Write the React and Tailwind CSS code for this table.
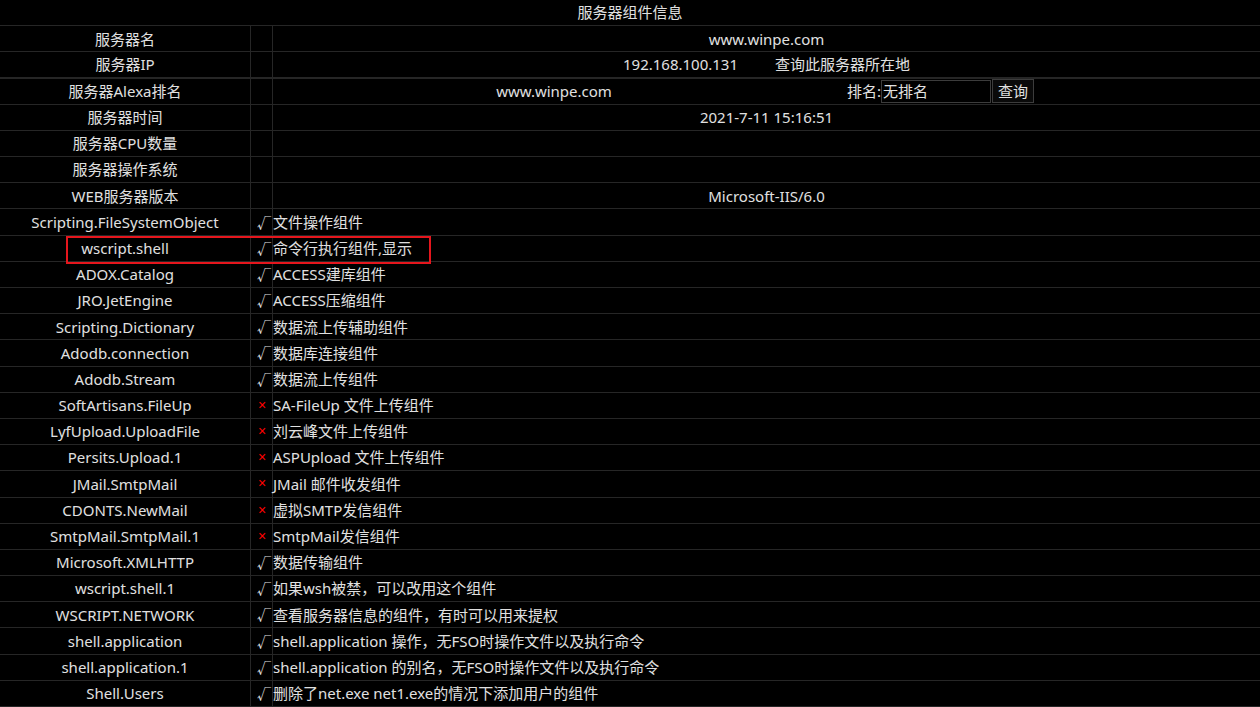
import React from "react";

const font = { fontFamily: '"Segoe UI", "Noto Sans", "Noto Sans CJK SC", sans-serif' };

const info = [
  ["服务器名", "www.winpe.com"],
  ["服务器IP", "ip"],
  ["服务器Alexa排名", "alexa"],
  ["服务器时间", "2021-7-11 15:16:51"],
  ["服务器CPU数量", ""],
  ["服务器操作系统", ""],
  ["WEB服务器版本", "Microsoft-IIS/6.0"],
];

const comps = [
  ["Scripting.FileSystemObject", true, "文件操作组件"],
  ["wscript.shell", true, "命令行执行组件,显示"],
  ["ADOX.Catalog", true, "ACCESS建库组件"],
  ["JRO.JetEngine", true, "ACCESS压缩组件"],
  ["Scripting.Dictionary", true, "数据流上传辅助组件"],
  ["Adodb.connection", true, "数据库连接组件"],
  ["Adodb.Stream", true, "数据流上传组件"],
  ["SoftArtisans.FileUp", false, "SA-FileUp 文件上传组件"],
  ["LyfUpload.UploadFile", false, "刘云峰文件上传组件"],
  ["Persits.Upload.1", false, "ASPUpload 文件上传组件"],
  ["JMail.SmtpMail", false, "JMail 邮件收发组件"],
  ["CDONTS.NewMail", false, "虚拟SMTP发信组件"],
  ["SmtpMail.SmtpMail.1", false, "SmtpMail发信组件"],
  ["Microsoft.XMLHTTP", true, "数据传输组件"],
  ["wscript.shell.1", true, "如果wsh被禁，可以改用这个组件"],
  ["WSCRIPT.NETWORK", true, "查看服务器信息的组件，有时可以用来提权"],
  ["shell.application", true, "shell.application 操作，无FSO时操作文件以及执行命令"],
  ["shell.application.1", true, "shell.application 的别名，无FSO时操作文件以及执行命令"],
  ["Shell.Users", true, "删除了net.exe net1.exe的情况下添加用户的组件"],
];

function Value({ v }) {
  if (v === "ip") {
    return (
      <div className="flex items-center justify-center gap-[37px]">
        <span>192.168.100.131</span>
        <span>查询此服务器所在地</span>
      </div>
    );
  }
  if (v === "alexa") {
    return (
      <div className="flex items-center h-full">
        <div className="w-[562px] text-center">www.winpe.com</div>
        <div className="flex items-center pl-[12px]">
          <span>排名:</span>
          <div className="w-[110px] h-[23px] border border-[#3c3c3c] bg-black px-[1px] flex items-center leading-none">无排名</div>
          <div className="ml-px w-[42px] h-[24px] border border-[#3c3c3c] bg-[#0a0a0a] flex items-center justify-center leading-none">查询</div>
        </div>
      </div>
    );
  }
  return <div className="text-center">{v}</div>;
}

export default function App() {
  return (
    <div className="relative w-[1260px] h-[707px] bg-black text-[#e0e0e0] text-[15px] overflow-hidden" style={font}>
      <div className="grid grid-cols-[251px_22px_1fr] grid-rows-[repeat(27,1fr)] h-[707px]">
        <div className="col-span-3 flex items-center justify-center border-b border-[#262626]">服务器组件信息</div>
        {info.map(([k, v], i) => (
          <React.Fragment key={k}>
            <div className={`flex items-center justify-center border-r border-[#262626] ${i === 1 ? "border-b-2" : "border-b"} border-b-[#262626]`}>{k}</div>
            <div className={`border-r border-[#262626] ${i === 1 ? "border-b-2" : "border-b"} border-b-[#262626]`}></div>
            <div className={`flex items-center justify-center ${i === 1 ? "border-b-2" : "border-b"} border-[#262626]`}>
              <div className="w-full"><Value v={v} /></div>
            </div>
          </React.Fragment>
        ))}
        {comps.map(([k, ok, d]) => (
          <React.Fragment key={k}>
            <div className="flex items-center justify-center border-r border-b border-[#262626]">{k}</div>
            <div className="flex items-center pl-[6px] border-r border-b border-[#262626]">
              {ok ? (
                <span className="text-[14px]" style={{ fontFamily: '"Noto Sans CJK SC", sans-serif' }}>√</span>
              ) : (
                <span className="text-[#ff0000] text-[14px] pl-[1px]" style={{ fontFamily: '"Liberation Sans", sans-serif' }}>×</span>
              )}
            </div>
            <div className="flex items-center border-b border-[#262626] whitespace-nowrap">{d}</div>
          </React.Fragment>
        ))}
      </div>
      <div className="absolute left-[66px] top-[236px] w-[365px] h-[28px] border-2 border-[#e5161d] pointer-events-none"></div>
    </div>
  );
}
